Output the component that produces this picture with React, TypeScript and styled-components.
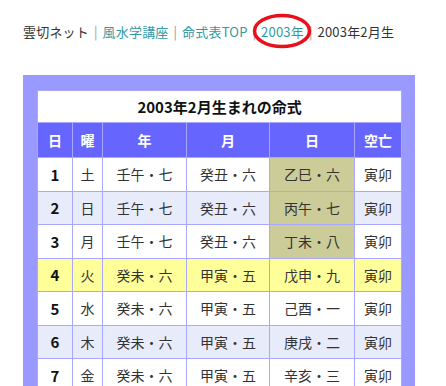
import styled, { createGlobalStyle } from "styled-components";

const GlobalStyle = createGlobalStyle`
  body {
    margin: 0;
    background: #fff;
    font-family: "Noto Sans CJK JP", "Noto Sans", sans-serif;
    color: #333;
  }
`;

const Breadcrumb = styled.nav`
  display: flex;
  align-items: center;
  padding: 22px 0 0 23px;
  font-size: 13px;
  line-height: 20px;
  white-space: nowrap;
`;

const Crumb = styled.span<{ $link?: boolean }>`
  position: relative;
  color: ${(p) => (p.$link ? "#3399a3" : "#333")};
  letter-spacing: 0.2px;
`;

const Sep = styled.span`
  color: #999;
  margin: 0 5px;
`;

const Circle = styled.svg`
  position: absolute;
  left: -9px;
  top: -10px;
  width: 60px;
  height: 38px;
  overflow: visible;
`;

const Panel = styled.div`
  margin: 33px 0 0 23px;
  width: 364px;
  padding: 15px 14px 30px;
  background: #9999ff;
`;

const Table = styled.table`
  width: 364px;
  border-collapse: collapse;
  background: #fff;
  table-layout: fixed;
`;

const Title = styled.th`
  height: 31px;
  padding: 0;
  font-size: 15px;
  font-weight: bold;
  color: #111;
  border: 1px solid #a8a8ff;
`;

const Head = styled.th`
  height: 34px;
  padding: 0;
  background: #6666ff;
  color: #fff;
  font-size: 14px;
  font-weight: bold;
  border: 1px solid #a8a8ff;
`;

const Row = styled.tr<{ $bg: string }>`
  height: 33.5px;
  background: ${(p) => p.$bg};
`;

const Cell = styled.td<{ $bg?: string; $bold?: boolean }>`
  padding: 0;
  text-align: center;
  font-size: ${(p) => (p.$bold ? "15px" : "14px")};
  font-weight: ${(p) => (p.$bold ? "bold" : "normal")};
  color: ${(p) => (p.$bold ? "#111" : "#333")};
  background: ${(p) => p.$bg ?? "transparent"};
  border: 1px solid #a8a8ff;
`;

const rows = [
  { d: "1", w: "土", y: "壬午・七", m: "癸丑・六", day: "乙巳・六", k: "寅卯" },
  { d: "2", w: "日", y: "壬午・七", m: "癸丑・六", day: "丙午・七", k: "寅卯" },
  { d: "3", w: "月", y: "壬午・七", m: "癸丑・六", day: "丁未・八", k: "寅卯" },
  { d: "4", w: "火", y: "癸未・六", m: "甲寅・五", day: "戊申・九", k: "寅卯" },
  { d: "5", w: "水", y: "癸未・六", m: "甲寅・五", day: "己酉・一", k: "寅卯" },
  { d: "6", w: "木", y: "癸未・六", m: "甲寅・五", day: "庚戌・二", k: "寅卯" },
  { d: "7", w: "金", y: "癸未・六", m: "甲寅・五", day: "辛亥・三", k: "寅卯" },
];

const widths = [35, 30, 84, 83, 85, 47];

export default function App() {
  return (
    <>
      <GlobalStyle />
      <Breadcrumb>
        <Crumb>雲切ネット</Crumb>
        <Sep>|</Sep>
        <Crumb $link>風水学講座</Crumb>
        <Sep>|</Sep>
        <Crumb $link>命式表TOP</Crumb>
        <Sep>|</Sep>
        <Crumb $link>
          2003年
          <Circle viewBox="0 0 60 38">
            <ellipse cx="30" cy="19" rx="27.5" ry="15.5" fill="none" stroke="#e8101a" strokeWidth="3.5" />
          </Circle>
        </Crumb>
        <Sep>|</Sep>
        <Crumb>2003年2月生</Crumb>
      </Breadcrumb>
      <Panel>
        <Table>
          <colgroup>
            {widths.map((w, i) => (
              <col key={i} style={{ width: w }} />
            ))}
          </colgroup>
          <thead>
            <tr>
              <Title colSpan={6}>2003年2月生まれの命式</Title>
            </tr>
            <tr>
              <Head>日</Head>
              <Head>曜</Head>
              <Head>年</Head>
              <Head>月</Head>
              <Head>日</Head>
              <Head>空亡</Head>
            </tr>
          </thead>
          <tbody>
            {rows.map((r, i) => {
              const today = i === 3;
              const bg = today ? "#ffff99" : i % 2 === 1 ? "#e8ecfa" : "#fff";
              return (
                <Row key={r.d} $bg={bg}>
                  <Cell $bold>{r.d}</Cell>
                  <Cell>{r.w}</Cell>
                  <Cell>{r.y}</Cell>
                  <Cell>{r.m}</Cell>
                  <Cell $bg={i < 3 ? "#cccc99" : undefined}>{r.day}</Cell>
                  <Cell>{r.k}</Cell>
                </Row>
              );
            })}
          </tbody>
        </Table>
      </Panel>
    </>
  );
}
